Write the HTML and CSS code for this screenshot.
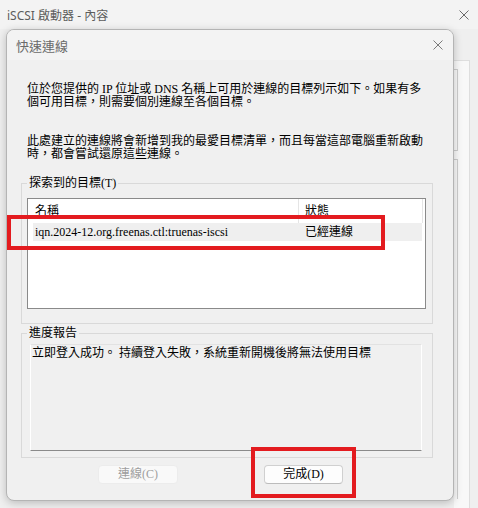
FILE: index.html
```html
<!DOCTYPE html>
<html lang="zh-Hant">
<head>
    <meta charset="UTF-8">
    <title>iSCSI 啟動器 - 內容</title>
    <link rel="stylesheet" href="styles.css">
</head>
<body>
    <div class="window">
        <div class="titlebar">
            <span class="title">iSCSI 啟動器 - 內容</span>
            <svg class="close-icon" width="10" height="10" viewBox="0 0 10 10"><path d="M0.5 0.5 L9.5 9.5 M9.5 0.5 L0.5 9.5" stroke="#6a6a6a" stroke-width="1" fill="none"/></svg>
        </div>

        <div class="window-body">
            <div class="dialog">
                <div class="dialog-title">
                    <span class="title">快速連線</span>
                    <svg class="close-icon" width="10" height="10" viewBox="0 0 10 10"><path d="M0.5 0.5 L9.5 9.5 M9.5 0.5 L0.5 9.5" stroke="#7a7a7a" stroke-width="1" fill="none"/></svg>
                </div>

                <div class="dialog-body">
                    <p class="info">位於您提供的 IP 位址或 DNS 名稱上可用於連線的目標列示如下。如果有多<br>個可用目標，則需要個別連線至各個目標。</p>
                    <p class="info second">此處建立的連線將會新增到我的最愛目標清單，而且每當這部電腦重新啟動<br>時，都會嘗試還原這些連線。</p>

                    <!-- 探索到的目標 -->
                    <fieldset class="group targets">
                        <legend>探索到的目標(T)</legend>
                        <div class="listview">
                            <div class="lv-header">
                                <div class="lv-col name">名稱</div>
                                <div class="lv-col status">狀態</div>
                            </div>
                            <div class="lv-row selected">
                                <div class="lv-cell name">iqn.2024-12.org.freenas.ctl:truenas-iscsi</div>
                                <div class="lv-cell status">已經連線</div>
                            </div>
                        </div>
                    </fieldset>

                    <!-- 進度報告 -->
                    <fieldset class="group progress">
                        <legend>進度報告</legend>
                        <div class="report">立即登入成功。 持續登入失敗，系統重新開機後將無法使用目標</div>
                    </fieldset>

                    <div class="buttons">
                        <button class="btn" disabled>連線(C)</button>
                        <button class="btn primary">完成(D)</button>
                    </div>
                </div>
            </div>

            <div class="behind">
                <div class="tab-panel">
                    <div class="ghost-box"></div>
                    <div class="ghost-box tall"></div>
                </div>
            </div>
        </div>

        <div class="highlight hl-row"></div>
        <div class="highlight hl-button"></div>
    </div>
</body>
</html>
```

FILE: styles.css
```css
* {
    margin: 0;
    padding: 0;
    box-sizing: border-box;
}

body {
    width: 478px;
    height: 508px;
    overflow: hidden;
    background: #efefef;
    font-family: 'Liberation Serif', 'Noto Sans CJK TC', serif;
    font-size: 12px;
    color: #000;
}

.window {
    position: relative;
    height: 508px;
    overflow: hidden;
}

/* Title bars */
.titlebar {
    height: 29px;
    background: #f3f3f3;
    display: flex;
    align-items: center;
    justify-content: space-between;
    padding: 0 9px 0 7px;
}

.titlebar .title {
    font-family: 'Noto Sans', 'Noto Sans CJK TC', sans-serif;
    font-size: 12px;
    color: #5c5c5c;
}

.window-body {
    display: flex;
    align-items: flex-start;
    padding-left: 6px;
    height: 479px;
}

/* Dialog */
.dialog {
    width: 448px;
    border: 1px solid #b4b4b4;
    border-radius: 8px;
    background: #f0f0f0;
    box-shadow: 0 2px 8px rgba(0, 0, 0, 0.22);
    overflow: hidden;
    position: relative;
    z-index: 1;
}

.dialog-title {
    height: 30px;
    background: #f3f3f3;
    display: flex;
    align-items: center;
    justify-content: space-between;
    padding: 0 10px 0 9px;
}

.dialog-title .title {
    font-family: 'Noto Sans', 'Noto Sans CJK TC', sans-serif;
    font-size: 13px;
    color: #6a6a6a;
}

.dialog-body {
    padding: 23px 20px 16px 14px;
}

.info {
    padding-left: 6px;
    line-height: 13px;
    white-space: nowrap;
}

.info.second {
    margin-top: 26px;
}

/* Group boxes */
.group {
    border: 1px solid #d9d9d9;
    min-inline-size: 0;
}

.group legend {
    padding: 0 2px;
    line-height: 14px;
}

.targets {
    margin-top: 15px;
    padding: 8px 6px 14px 5px;
}

.progress {
    margin-top: 2px;
    padding: 4px 10px 6px 8px;
}

.progress legend {
    margin-left: -3px;
}

/* List view */
.listview {
    height: 111px;
    border: 1px solid #8a8a8a;
    background: #fff;
}

.lv-header {
    display: flex;
    height: 24px;
}

.lv-col {
    border-right: 1px solid #e5e5e5;
    line-height: 24px;
    padding-left: 7px;
}

.lv-col.name {
    width: 271px;
}

.lv-col.status {
    width: 124px;
    padding-left: 6px;
}

.lv-row {
    display: flex;
    margin-left: 5px;
    width: 389px;
    height: 18px;
    line-height: 18px;
}

.lv-row.selected {
    background: #efefef;
}

.lv-cell.name {
    width: 265px;
    padding-left: 2px;
}

.lv-cell.status {
    padding-left: 7px;
}

/* Progress report box */
.report {
    height: 107px;
    border-top: 1px solid #e2e2e2;
    border-left: 1px solid #fff;
    border-right: 1px solid #fff;
    border-bottom: 1px solid #8a8a8a;
    padding: 2px 1px;
    line-height: 13px;
    white-space: nowrap;
}

/* Buttons */
.buttons {
    display: flex;
    gap: 86px;
    margin-top: 7px;
    padding-left: 77px;
}

.btn {
    width: 80px;
    height: 19px;
    border-radius: 4px;
    font-family: 'Liberation Serif', 'Noto Sans CJK TC', serif;
    font-size: 12px;
    line-height: 17px;
}

.btn[disabled] {
    background: #f9f9f9;
    border: 1px solid #ececec;
    color: #9e9e9e;
}

.btn.primary {
    width: 79px;
    background: #fdfdfd;
    border: 1px solid #d0d0d0;
    border-bottom-color: #bcbcbc;
    color: #000;
}

/* Parent window content behind the dialog */
.behind {
    flex: 1;
    padding-top: 31px;
    height: 100%;
}

.tab-panel {
    width: 16px;
    height: 100%;
    overflow: hidden;
    background: #f8f8f8;
    border-top: 1px solid #dedede;
    border-right: 1px solid #dedede;
    padding-top: 8px;
}

.ghost-box {
    width: 4px;
    height: 82px;
    border: 1px solid #cdcdcd;
    border-left: none;
}

.ghost-box.tall {
    margin-top: 8px;
    height: 340px;
    border-bottom: none;
}

/* Red annotation boxes */
.highlight {
    position: absolute;
    border: 4px solid #e31b1f;
    z-index: 2;
}

.hl-row {
    left: 7px;
    top: 215px;
    width: 378px;
    height: 35px;
}

.hl-button {
    left: 251px;
    top: 447px;
    width: 105px;
    height: 51px;
}
```
